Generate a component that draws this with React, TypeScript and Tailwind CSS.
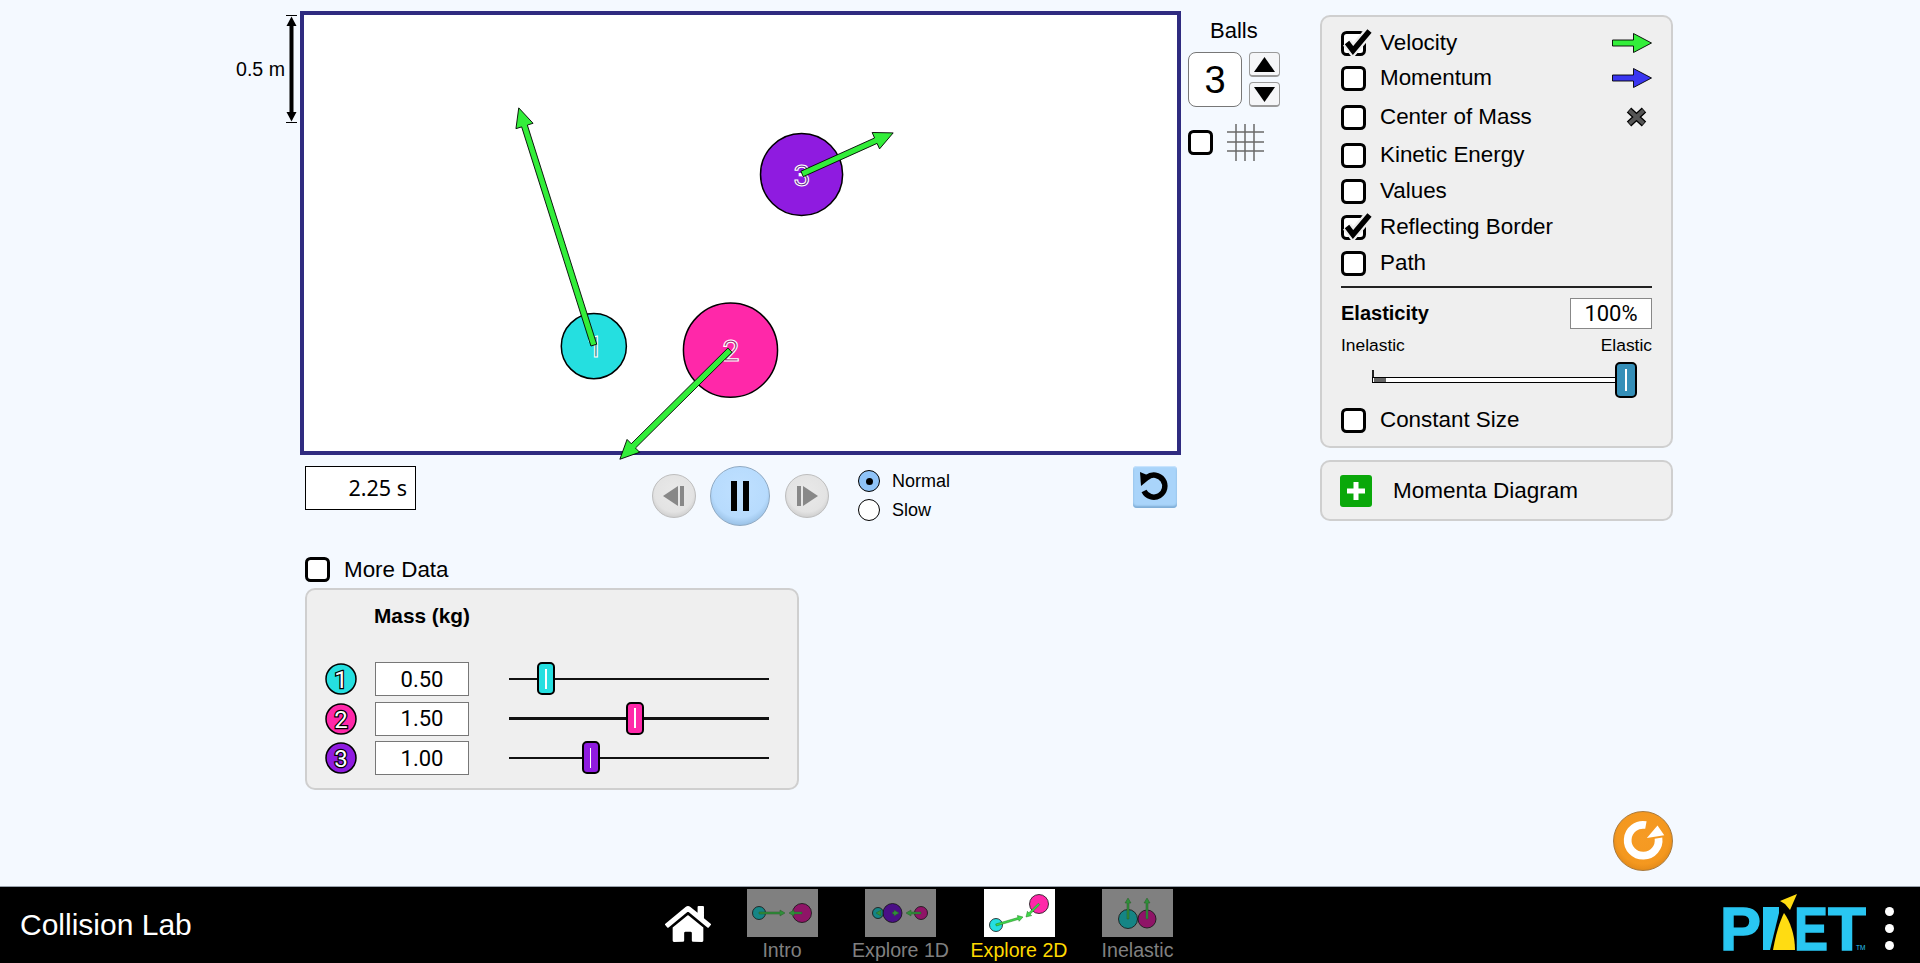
import { FaHome } from "react-icons/fa";

const ARROW_GREEN = "#33ee3a";

function arrowPoints(x1: number, y1: number, x2: number, y2: number, shaft = 3, headLen = 19, headHalf = 9) {
  const len = Math.hypot(x2 - x1, y2 - y1);
  const ux = (x2 - x1) / len;
  const uy = (y2 - y1) / len;
  const nx = -uy;
  const ny = ux;
  const bx = x2 - ux * headLen;
  const by = y2 - uy * headLen;
  const pts = [
    [x1 + nx * shaft, y1 + ny * shaft],
    [bx + nx * shaft, by + ny * shaft],
    [bx + nx * headHalf, by + ny * headHalf],
    [x2, y2],
    [bx - nx * headHalf, by - ny * headHalf],
    [bx - nx * shaft, by - ny * shaft],
    [x1 - nx * shaft, y1 - ny * shaft],
  ];
  return pts.map((p) => p.map((v) => v.toFixed(1)).join(",")).join(" ");
}

function Arrow(props: {
  from: [number, number];
  to: [number, number];
  fill?: string;
  shaft?: number;
  headLen?: number;
  headHalf?: number;
}) {
  return (
    <polygon
      points={arrowPoints(props.from[0], props.from[1], props.to[0], props.to[1], props.shaft, props.headLen, props.headHalf)}
      fill={props.fill ?? ARROW_GREEN}
      stroke="#000"
      strokeWidth="0.9"
    />
  );
}

function Ball(props: { x: number; y: number; r: number; color: string; n: string; tx: number; ty: number }) {
  return (
    <g>
      <circle cx={props.x} cy={props.y} r={props.r} fill={props.color} stroke="#000" strokeWidth="1.5" />
      <text
        x={props.tx}
        y={props.ty}
        textAnchor="middle"
        fontFamily="Roboto, Arial, sans-serif"
        fontSize="30"
        fill="rgba(60,60,60,0.5)"
        stroke="#fff"
        strokeWidth="1.1"
      >
        {props.n}
      </text>
    </g>
  );
}

function Checkbox(props: { checked?: boolean }) {
  return (
    <svg className="-mt-[3px] h-[28px] w-[29px] shrink-0 overflow-visible" viewBox="0 -3 29 28">
      <rect x="1.5" y="1.5" width="22" height="22" rx="4" fill="#fff" stroke="#000" strokeWidth="3" />
      {props.checked ? (
        <>
          <path d="M6 11.5 L12 19.5 L28.5 0" fill="none" stroke="#efefef" strokeWidth="10" />
          <path d="M6 11.5 L12 19.5 L28.5 0" fill="none" stroke="#000" strokeWidth="5.5" />
        </>
      ) : null}
    </svg>
  );
}

function LegendArrow(props: { fill: string }) {
  return (
    <svg className="-mt-[1px] h-[20px] w-[40px]" viewBox="0 0 40 20">
      <Arrow from={[0.5, 10]} to={[39.5, 10]} fill={props.fill} shaft={3} headLen={18} headHalf={9.5} />
    </svg>
  );
}

function CheckRow(props: { label: string; checked?: boolean; right?: React.ReactNode; className?: string }) {
  return (
    <div className={"flex h-[25px] items-center " + (props.className ?? "")}>
      <Checkbox checked={props.checked} />
      <span className="ml-[10px] text-[22.4px] leading-none text-black">{props.label}</span>
      {props.right ? <span className="ml-auto flex">{props.right}</span> : null}
    </div>
  );
}

function SliderThumb(props: { color: string; className?: string }) {
  return (
    <span
      className={"flex items-center justify-center rounded-[5px] border-2 border-black " + (props.className ?? "")}
      style={{ backgroundColor: props.color }}
    >
      <span className="h-[70%] w-[1.5px] bg-white" />
    </span>
  );
}

function MassRow(props: { n: string; mass: number; color: string }) {
  const center = props.mass * 89 - 7.5;
  return (
    <div className="flex h-[34px] items-center">
      <svg className="ml-[18px] h-[32px] w-[32px] shrink-0" viewBox="0 0 32 32">
        <circle cx="16" cy="16" r="15" fill={props.color} stroke="#000" strokeWidth="1.5" />
        <text
          x="16"
          y="24.5"
          textAnchor="middle"
          fontFamily="Roboto, Arial, sans-serif"
          fontSize="24"
          fill="#fff"
          stroke="#000"
          strokeWidth="2.5"
          paintOrder="stroke"
        >
          {props.n}
        </text>
      </svg>
      <div className="ml-[18px] flex h-[34px] w-[94px] items-center justify-center border border-[#777] bg-white text-[22px] text-black [font-family:'Roboto',sans-serif]">
        {props.mass.toFixed(2)}
      </div>
      <div className="relative ml-[40px] h-[2.5px] w-[260px] bg-[#111]">
        <span className="absolute top-[-15.5px]" style={{ left: center - 9 }}>
          <SliderThumb color={props.color} className="h-[33px] w-[18px]" />
        </span>
      </div>
    </div>
  );
}

function StepButton(props: { dir: "back" | "forward" }) {
  return (
    <button className="flex h-[44px] w-[44px] items-center justify-center rounded-full border border-[#bdbdbd] bg-[radial-gradient(circle_at_50%_42%,#e9e9e9_0%,#e3e3e3_60%,#b4b4b4_100%)]">
      <svg className="h-[20px] w-[22px]" viewBox="0 0 22 20">
        {props.dir === "back" ? (
          <>
            <polygon points="0,10 15,0 15,20" fill="#888" />
            <rect x="17" y="0" width="4" height="20" fill="#888" />
          </>
        ) : (
          <>
            <rect x="1" y="0" width="4" height="20" fill="#888" />
            <polygon points="22,10 7,0 7,20" fill="#888" />
          </>
        )}
      </svg>
    </button>
  );
}

function Radio(props: { label: string; selected?: boolean }) {
  return (
    <div className="flex h-[22px] items-center">
      <span
        className={
          "flex h-[22px] w-[22px] items-center justify-center rounded-full border-[1.5px] border-black " +
          (props.selected ? "bg-[#8fc3f7]" : "bg-white")
        }
      >
        {props.selected ? <span className="h-[7px] w-[7px] rounded-full bg-black" /> : null}
      </span>
      <span className="ml-[12px] text-[18px] leading-none text-black">{props.label}</span>
    </div>
  );
}

function SpinButton(props: { up?: boolean }) {
  return (
    <button className="flex h-[25px] w-[31px] items-center justify-center rounded-[4px] border border-b-2 border-[#9a9a9a] bg-[#f5f6f8]">
      <svg className="h-[15px] w-[21px]" viewBox="0 0 21 15">
        <polygon points={props.up ? "10.5,0 21,15 0,15" : "0,0 21,0 10.5,15"} fill="#000" />
      </svg>
    </button>
  );
}

const TEAL = "#158585";
const MAROON = "#8f1467";
const DIM_GREEN = "#2f8f3a";

function TabArrow(props: { from: [number, number]; to: [number, number]; fill?: string; stroke?: string }) {
  return (
    <polygon
      points={arrowPoints(props.from[0], props.from[1], props.to[0], props.to[1], 1, 5, 3)}
      fill={props.fill ?? DIM_GREEN}
      stroke={props.stroke ?? "#2a5a2a"}
      strokeWidth="0.5"
    />
  );
}

function TabBall(props: { x: number; y: number; r: number; fill: string }) {
  return <circle cx={props.x} cy={props.y} r={props.r} fill={props.fill} stroke="#111" strokeWidth="0.8" />;
}

function NavTab(props: { label: string; active?: boolean; children: React.ReactNode }) {
  return (
    <div className="flex w-[118.5px] flex-col items-center pt-[2px]">
      <svg className={"h-[48px] w-[71px] " + (props.active ? "bg-white" : "bg-[#808080]")} viewBox="0 0 71 48">
        {props.children}
      </svg>
      <span className={"mt-[3px] text-[19.6px] leading-[20px] " + (props.active ? "text-[#ffd900]" : "text-[#808080]")}>
        {props.label}
      </span>
    </div>
  );
}

function PhetLogo() {
  const font = "Liberation Sans, Arial, sans-serif";
  const blue = "#29c6f2";
  return (
    <svg className="h-[60px] w-[146px]" viewBox="0 0 146 60">
      <text x="0" y="57" fontFamily={font} fontWeight="700" fontSize="62" fill={blue} stroke={blue} strokeWidth="1.5" textLength="41" lengthAdjust="spacingAndGlyphs">
        P
      </text>
      <polygon points="43,14 59,14 59,20 50,57 43,57" fill={blue} />
      <path d="M53 57 C 56 40 60 28 64 20 C 70 28 75 42 75 57 Z" fill="#ffdc12" />
      <polygon points="60,8 77,1 70,17 65,11" fill="#ffdc12" />
      <text x="74" y="57" fontFamily={font} fontWeight="700" fontSize="62" fill={blue} stroke={blue} strokeWidth="1.5" textLength="34" lengthAdjust="spacingAndGlyphs">
        E
      </text>
      <text x="108" y="57" fontFamily={font} fontWeight="700" fontSize="62" fill={blue} stroke={blue} strokeWidth="1.5" textLength="38" lengthAdjust="spacingAndGlyphs">
        T
      </text>
      <text x="136" y="57" fontFamily={font} fontSize="6.5" fill={blue}>
        TM
      </text>
    </svg>
  );
}

export default function App() {
  return (
    <div className="flex h-screen w-full flex-col overflow-hidden bg-[#f4f9ff] text-black [font-family:'Liberation_Sans',Arial,sans-serif]">
      <main className="flex h-[886px] shrink-0 pt-[11px] pb-[15px] pl-[236px]">
        {/* scale indicator */}
        <div className="mt-[4px] flex h-[108px] w-[64px] shrink-0 items-center">
          <span className="w-[50px] pt-[2px] text-[19.6px] leading-none whitespace-nowrap">0.5 m</span>
          <svg className="h-[108px] w-[11px]" viewBox="0 0 11 108">
            <path d="M0 .5H11M0 107.5H11" stroke="#000" strokeWidth="1" />
            <path d="M5.5 10V98" stroke="#000" strokeWidth="4" />
            <polygon points="5.5,1.5 10.5,11 .5,11" fill="#000" />
            <polygon points="5.5,106.5 10.5,97 .5,97" fill="#000" />
          </svg>
        </div>

        {/* play area column */}
        <div className="w-[881px] shrink-0">
          <div className="relative h-[444px] w-[881px] border-[4.5px] border-[#2f2b80] bg-white">
            <svg className="absolute inset-0 h-full w-full overflow-visible" viewBox="304.5 15.5 872 435">
              <Ball x={594} y={346} r={32.5} color="#25dfe0" n="1" tx={595} ty={357} />
              <Ball x={730.5} y={350} r={47} color="#ff28a9" n="2" tx={731} ty={361} />
              <Ball x={801.5} y={174.5} r={41} color="#8f1be0" n="3" tx={802} ty={186} />
              <Arrow from={[594, 345]} to={[519, 108]} />
              <Arrow from={[730, 350]} to={[620, 459]} />
              <Arrow from={[802, 174]} to={[893, 133]} />
            </svg>
          </div>

          {/* time and step controls */}
          <div className="mt-[11px] flex h-[60px] items-start pl-[5px]">
            <div className="flex h-[44px] w-[111px] items-center justify-end border-[1.5px] border-black bg-white pr-[8px] text-[21.5px] [font-family:'Noto_Sans',sans-serif]">
              2.25 s
            </div>
            <div className="ml-[236px] flex h-[60px] items-center">
              <StepButton dir="back" />
              <button className="ml-[14px] flex h-[60px] w-[60px] items-center justify-center gap-[6.5px] rounded-full border border-[#8fa9c2] bg-[radial-gradient(circle_at_50%_40%,#bfe0ff_0%,#b7dbfd_60%,#74a0c8_100%)]">
                <span className="h-[30px] w-[6px] bg-black" />
                <span className="h-[30px] w-[6px] bg-black" />
              </button>
              <span className="ml-[15px]">
                <StepButton dir="forward" />
              </span>
            </div>
            <div className="ml-[29px] flex flex-col gap-[7px] pt-[4px]">
              <Radio label="Normal" selected />
              <Radio label="Slow" />
            </div>
            <button className="mr-[4px] ml-auto flex h-[42px] w-[44px] items-center justify-center rounded-[4px] bg-[#a9d4fa] shadow-[inset_0_-2px_2px_#7fadd6,inset_0_1px_1px_#cbe5fd]">
              <svg className="h-[42px] w-[44px]" viewBox="0 0 44 42">
                <path d="M14 11.5 A11 11 0 1 1 11 25" fill="none" stroke="#000" strokeWidth="5.5" />
                <polygon points="7,6 19,11 8,20" fill="#000" />
              </svg>
            </button>
          </div>

          <div className="mt-[31px] flex h-[25px] items-center pl-[5px]">
            <Checkbox />
            <span className="ml-[10px] pt-[2px] text-[22.4px] leading-none">More Data</span>
          </div>

          {/* mass panel */}
          <div className="mt-[6px] ml-[5px] h-[202px] w-[494px] rounded-[10px] border-2 border-[#cfcfcf] bg-[#efefef] pt-[14px]">
            <div className="ml-[67px] text-[20.8px] leading-[24px] font-bold">Mass (kg)</div>
            <div className="mt-[34px] flex flex-col gap-[5.5px]">
              <MassRow n="1" mass={0.5} color="#25dfe0" />
              <MassRow n="2" mass={1.5} color="#ff28a9" />
              <MassRow n="3" mass={1.0} color="#8f1be0" />
            </div>
          </div>
        </div>

        {/* ball count */}
        <div className="ml-[7px] w-[92px] shrink-0">
          <div className="mt-[8px] h-[24px] pl-[22px] text-[22px] leading-[24px]">Balls</div>
          <div className="mt-[9px] flex">
            <div className="flex h-[55px] w-[54px] items-center justify-center rounded-[8px] border border-[#777] bg-white text-[38px] leading-none">
              3
            </div>
            <div className="ml-[7px] flex flex-col gap-[5px]">
              <SpinButton up />
              <SpinButton />
            </div>
          </div>
          <div className="mt-[23px] flex h-[25px] items-center">
            <Checkbox />
            <svg className="-mt-[1px] ml-[10px] h-[37px] w-[37px] shrink-0" viewBox="0 0 37 37">
              <path d="M9 0V37M18 0V37M27 0V37M0 8H37M0 18H37M0 27H37" stroke="#6a6a6a" strokeWidth="1.5" />
            </svg>
          </div>
        </div>

        {/* right column */}
        <div className="ml-[40px] flex w-[353px] shrink-0 flex-col">
          <div className="mt-[4px] rounded-[10px] border-2 border-[#cfcfcf] bg-[#efefef] px-[19px] pt-[14px] pb-[13px]">
            <CheckRow label="Velocity" checked right={<LegendArrow fill={ARROW_GREEN} />} />
            <CheckRow className="mt-[10px]" label="Momentum" right={<LegendArrow fill="#3a36f0" />} />
            <CheckRow
              className="mt-[14px]"
              label="Center of Mass"
              right={
                <svg className="-mt-[1px] mr-[5px] h-[20px] w-[21px]" viewBox="0 0 21 20">
                  <path d="M3 3L18 17M18 3L3 17" stroke="#000" strokeWidth="6.5" />
                  <path d="M3.5 3.5L17.5 16.5M17.5 3.5L3.5 16.5" stroke="#555" strokeWidth="4" />
                </svg>
              }
            />
            <CheckRow className="mt-[13px]" label="Kinetic Energy" />
            <CheckRow className="mt-[11px]" label="Values" />
            <CheckRow className="mt-[11px]" label="Reflecting Border" checked />
            <CheckRow className="mt-[11px]" label="Path" />
            <div className="mt-[10px] h-[2px] bg-[#222]" />

            <div className="mt-[10px] flex h-[31px] items-center justify-between">
              <span className="pb-[2px] text-[20px] leading-none font-bold">Elasticity</span>
              <span className="flex h-[31px] w-[82px] items-center justify-center border border-[#888] bg-white text-[22px] [font-family:'Roboto',sans-serif]">
                100%
              </span>
            </div>
            <div className="mt-[7px] flex h-[20px] items-center justify-between text-[17.4px] leading-none">
              <span>Inelastic</span>
              <span>Elastic</span>
            </div>
            <div className="relative mt-[6px] h-[36px]">
              <span className="absolute top-[8px] left-[31px] h-[13px] w-[2px] bg-[#222]" />
              <span className="absolute top-[15px] left-[31px] h-[6px] w-[245px] border border-black bg-white" />
              <span className="absolute top-[16px] left-[33px] h-[4px] w-[12px] bg-[#666]" />
              <SliderThumb color="#358fb8" className="absolute top-0 left-[274px] h-[36px] w-[22px]" />
            </div>
            <div className="mt-[10px]">
              <CheckRow label="Constant Size" />
            </div>
          </div>

          <div className="mt-[12px] flex h-[61px] items-center rounded-[10px] border-2 border-[#cfcfcf] bg-[#efefef] pl-[18px]">
            <span className="flex h-[32px] w-[32px] items-center justify-center rounded-[3px] bg-[#0aa80a]">
              <svg className="h-[20px] w-[20px]" viewBox="0 0 20 20">
                <path d="M10 1V19M1 10H19" stroke="#fff" strokeWidth="5" />
              </svg>
            </span>
            <span className="ml-[21px] pt-[2px] text-[22.5px] leading-none">Momenta Diagram</span>
          </div>

          <button className="mt-auto flex h-[60px] w-[60px] items-center justify-center self-end rounded-full border border-[#a97a3c] bg-[radial-gradient(circle_at_50%_45%,#f69b24_0%,#f4981f_60%,#c9740f_100%)]">
            <svg className="h-[60px] w-[60px]" viewBox="0 0 60 60">
              <path d="M33 13.5 A16 16 0 1 0 46 27" fill="none" stroke="#fff" strokeWidth="8" />
              <polygon points="45,14 34,27 52,24" fill="#fff" />
            </svg>
          </button>
        </div>
      </main>

      {/* navigation bar */}
      <footer className="grid h-[77px] shrink-0 grid-cols-[665px_auto_1fr] border-t border-[#9aa3ad] bg-black">
        <div className="flex h-[76px] items-center pb-[1px] pl-[20px] text-[30px] leading-none text-white">Collision Lab</div>
        <div className="flex">
          <div className="flex h-[76px] w-[46px] items-center justify-center pb-[2px]">
            <FaHome className="h-[42px] w-[46px] text-white" />
          </div>
          <div className="ml-[11.75px] flex">
            <NavTab label="Intro">
              <TabBall x={12} y={24} r={6.5} fill={TEAL} />
              <TabBall x={55} y={24} r={9.5} fill={MAROON} />
              <TabArrow from={[12, 24]} to={[38, 24]} />
              <TabArrow from={[55, 24]} to={[42, 24]} />
            </NavTab>
            <NavTab label="Explore 1D">
              <TabBall x={13} y={24} r={5.5} fill={TEAL} />
              <TabBall x={27.5} y={24} r={9.5} fill="#4a0f86" />
              <TabBall x={56} y={24} r={6.5} fill={MAROON} />
              <TabArrow from={[16, 24]} to={[11, 24]} />
              <TabArrow from={[27.5, 24]} to={[34, 24]} />
              <TabArrow from={[56, 24]} to={[41, 24]} />
            </NavTab>
            <NavTab label="Explore 2D" active>
              <TabBall x={12} y={36} r={6.5} fill="#25dfe0" />
              <TabBall x={55} y={15} r={9.5} fill="#ff28a9" />
              <TabArrow from={[12, 36]} to={[39, 28]} fill="#3fd84a" stroke="#1d7a1d" />
              <TabArrow from={[55, 15]} to={[42, 28]} fill="#3fd84a" stroke="#1d7a1d" />
            </NavTab>
            <NavTab label="Inelastic">
              <TabBall x={26} y={30} r={9.5} fill={TEAL} />
              <TabBall x={45} y={30} r={9} fill={MAROON} />
              <TabArrow from={[26, 30]} to={[26, 9]} />
              <TabArrow from={[45, 30]} to={[45, 9]} />
            </NavTab>
          </div>
        </div>
        <div className="flex items-start justify-end pr-[26px]">
          <div className="mt-[6px]">
            <PhetLogo />
          </div>
          <div className="mt-[20px] ml-[19px] flex flex-col gap-[8px]">
            <span className="h-[9px] w-[9px] rounded-full bg-white" />
            <span className="h-[9px] w-[9px] rounded-full bg-white" />
            <span className="h-[9px] w-[9px] rounded-full bg-white" />
          </div>
        </div>
      </footer>
    </div>
  );
}
